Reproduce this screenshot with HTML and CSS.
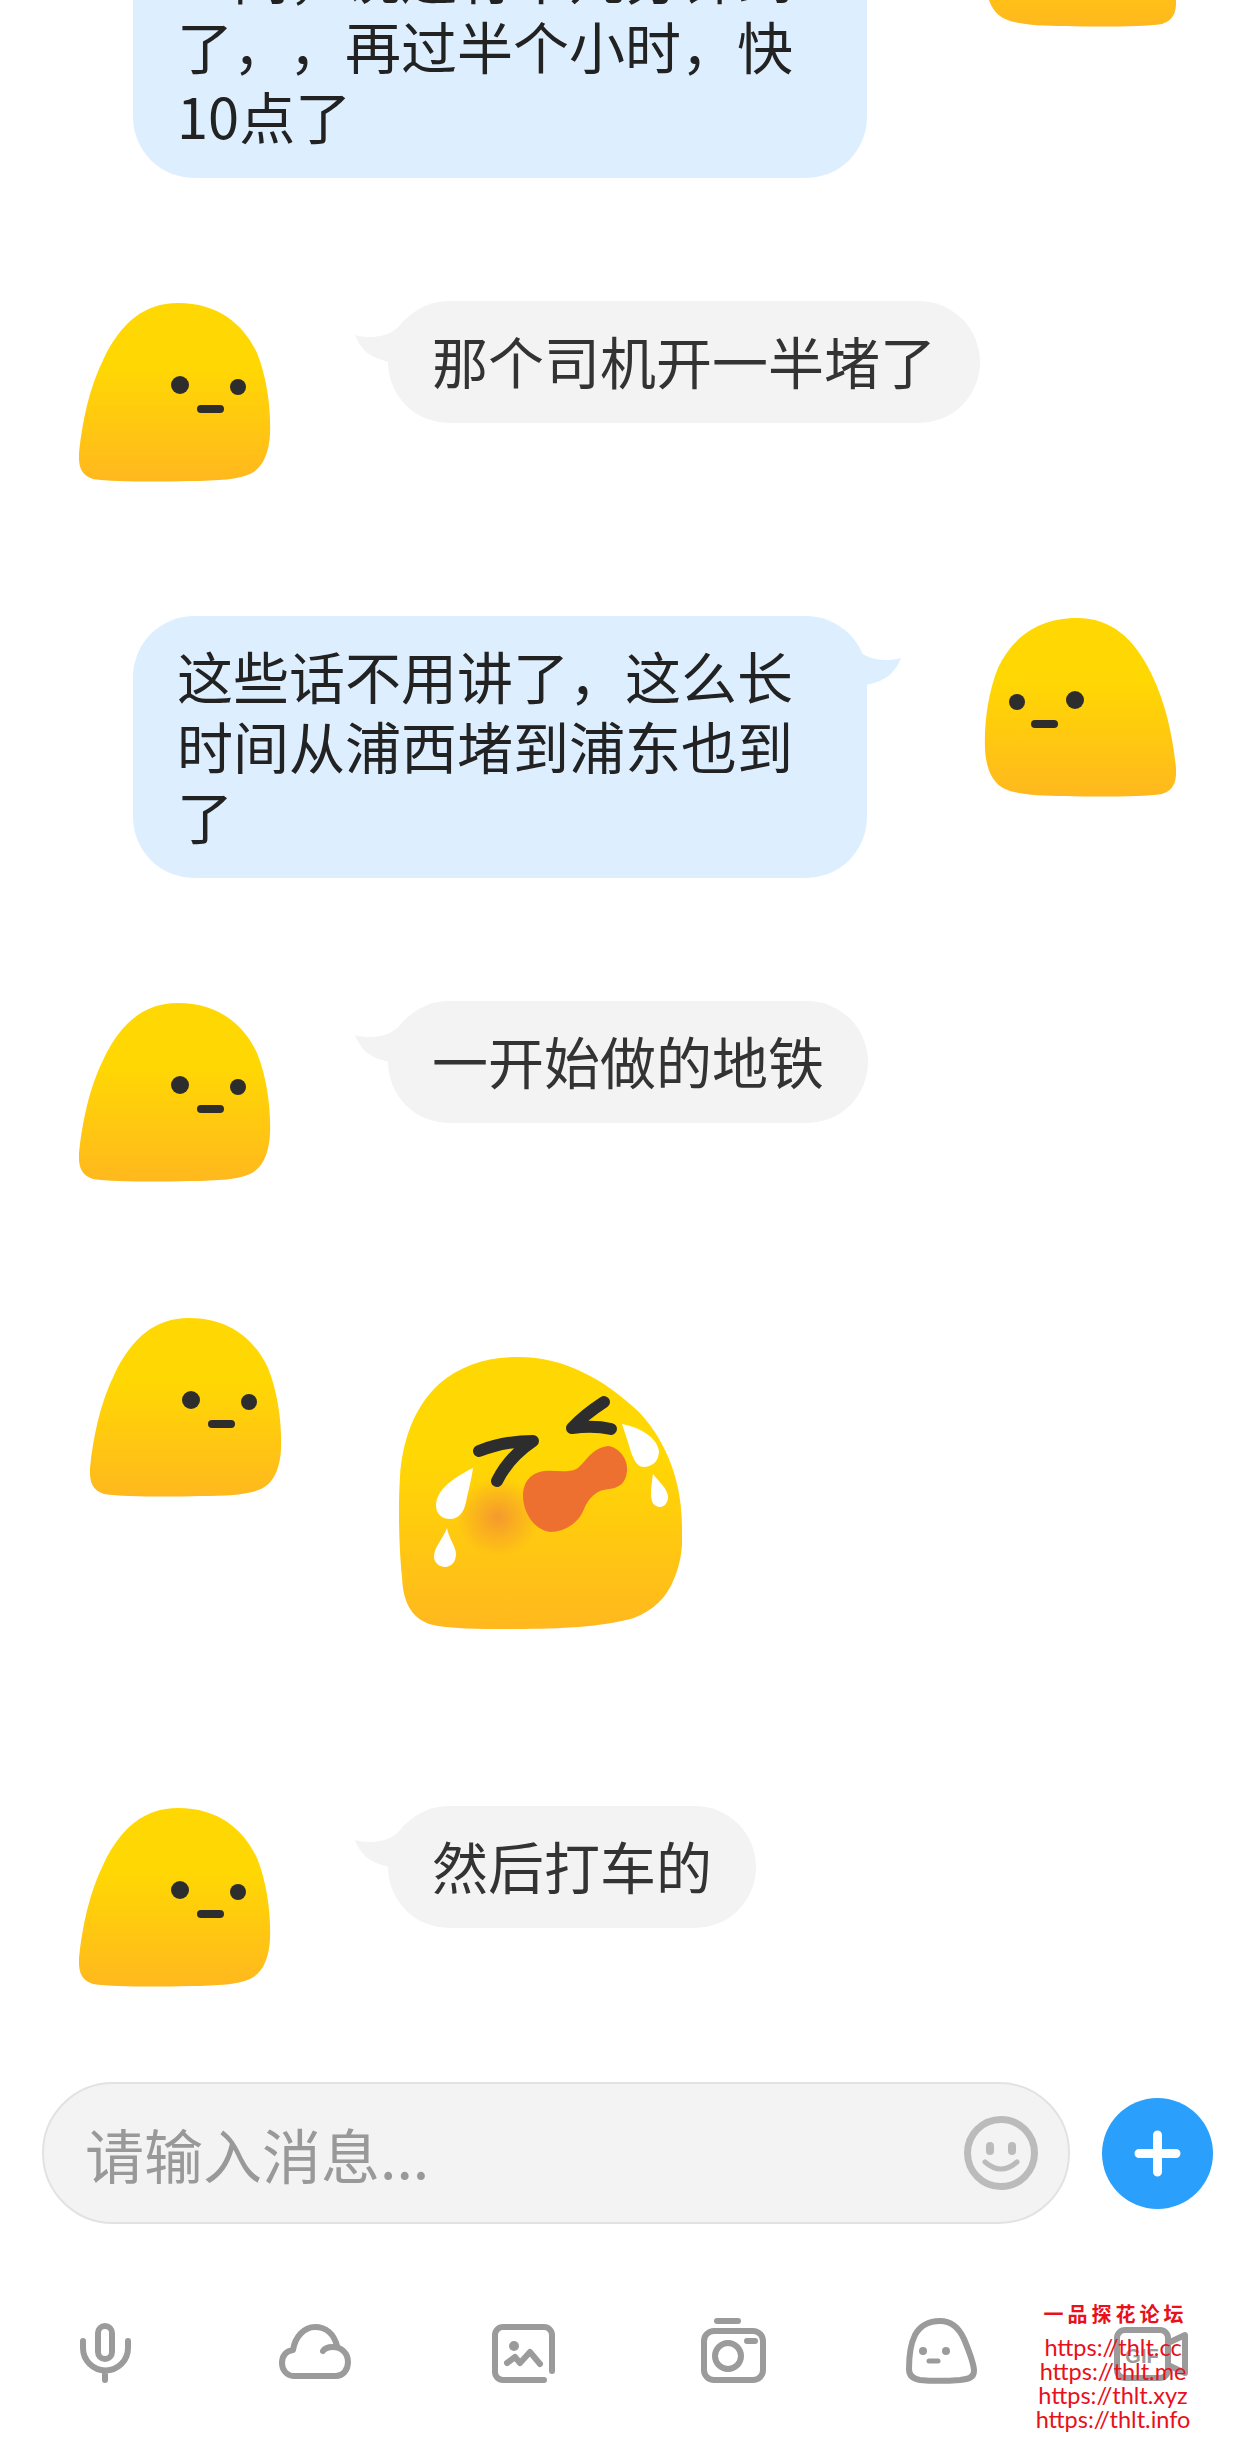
FILE: index.html
```html
<!DOCTYPE html>
<html lang="zh-CN">
<head>
  <meta charset="UTF-8">
  <meta name="viewport" content="width=device-width, initial-scale=1.0">
  <title>聊天</title>
  <link rel="stylesheet" href="styles.css">
</head>
<body>
  <!-- shared shapes -->
  <svg class="defs" aria-hidden="true">
    <defs>
      <linearGradient id="blobFill" x1="0" y1="0" x2="0" y2="1">
        <stop offset="0.35" stop-color="#ffd803"/>
        <stop offset="1" stop-color="#ffb81e"/>
      </linearGradient>
      <radialGradient id="blush">
        <stop offset="0" stop-color="#f5992e"/>
        <stop offset="1" stop-color="#f5992e" stop-opacity="0"/>
      </radialGradient>
      <symbol id="blob" viewBox="0 0 192 192">
        <path fill="url(#blobFill)" d="M99 2C140 2 165 24 178 52C188 77 192 107 191 133C190 152 184 167 171 173C160 178 140 180 110 180C80 181 35 181 14 178C4 175 -1 168 0 152C3 122 10 87 25 57C42 22 65 2 99 2Z"/>
        <circle cx="101" cy="84" r="9" fill="#2d2d2d"/>
        <circle cx="159" cy="86" r="8" fill="#2d2d2d"/>
        <rect x="118" y="104" width="27" height="8" rx="4" fill="#2d2d2d"/>
      </symbol>
      <symbol id="tail" viewBox="0 0 60 45">
        <path d="M0 15C18 20 40 16 49 0L60 20L35 42C15 38 6 30 0 15Z"/>
      </symbol>
    </defs>
  </svg>

  <div class="chat">
    <div class="row mine">
      <svg class="avatar"><use href="#blob"/></svg>
      <div class="bubble">
        <svg class="tail"><use href="#tail"/></svg>
        我问他什么时候能到这里一问，说还有十几分钟到了，，再过半个小时，快10点了
      </div>
    </div>

    <div class="row">
      <svg class="avatar"><use href="#blob"/></svg>
      <div class="bubble">
        <svg class="tail"><use href="#tail"/></svg>
        那个司机开一半堵了
      </div>
    </div>

    <div class="row mine">
      <svg class="avatar"><use href="#blob"/></svg>
      <div class="bubble">
        <svg class="tail"><use href="#tail"/></svg>
        这些话不用讲了，这么长时间从浦西堵到浦东也到了
      </div>
    </div>

    <div class="row">
      <svg class="avatar"><use href="#blob"/></svg>
      <div class="bubble">
        <svg class="tail"><use href="#tail"/></svg>
        一开始做的地铁
      </div>
    </div>

    <div class="row sticker-row">
      <svg class="avatar"><use href="#blob"/></svg>
      <!-- crying laugh sticker -->
      <svg class="sticker" viewBox="0 0 283 272">
        <path fill="url(#blobFill)" d="M120 0C165 0 205 22 240 55C268 85 283 125 283 170C284 190 282 205 275 222C268 240 255 253 235 261C200 271 150 272 110 272C80 272 50 272 30 267C12 260 4 245 3 220C0 190 -1 150 1 120C3 85 15 50 40 27C62 8 88 0 120 0Z"/>
        <ellipse cx="99" cy="160" rx="42" ry="40" fill="url(#blush)"/>
        <path fill="#ee7030" d="M210 89C222 92 229 103 228 114C227 126 220 131 210 132C198 133 190 140 185 152C180 166 165 175 151 175C135 173 124 155 124 139C124 124 133 115 146 114C158 113 172 117 180 110C188 103 194 90 210 89Z"/>
        <path class="sticker-eye" d="M80 94Q105 84 134 84Q110 100 98 124"/>
        <path class="sticker-eye" d="M205 45Q185 58 173 71Q195 68 212 72"/>
        <path fill="#fff" d="M74 111C60 118 38 130 37 148C37 158 44 162 51 162C60 162 65 155 67 145C69 135 72 125 74 111Z"/>
        <path fill="#fff" d="M48 171C44 182 35 190 35 200C35 206 41 210 46 210C52 210 57 205 57 197C57 190 50 182 48 171Z"/>
        <path fill="#fff" d="M223 67C240 70 258 80 260 94C260 105 252 110 245 110C238 110 235 103 232 95C229 85 226 76 223 67Z"/>
        <path fill="#fff" d="M254 117C260 125 269 132 269 140C269 146 265 150 261 150C255 150 252 145 252 138C252 130 253 124 254 117Z"/>
      </svg>
    </div>

    <div class="row">
      <svg class="avatar"><use href="#blob"/></svg>
      <div class="bubble">
        <svg class="tail"><use href="#tail"/></svg>
        然后打车的
      </div>
    </div>
  </div>

  <!-- 输入框 -->
  <div class="composer">
    <div class="input">
      <span class="placeholder">请输入消息...</span>
      <svg class="smile" viewBox="0 0 80 80">
        <circle cx="40" cy="40" r="33.5" stroke-width="7"/>
        <path d="M29 33V38M51 33V38" stroke-width="8"/>
        <path d="M24 49Q40 63 56 49" stroke-width="5"/>
      </svg>
    </div>
    <svg class="send" viewBox="0 0 111 111">
      <circle cx="55.5" cy="55.5" r="55.5"/>
      <path d="M37 55.5H74M55.5 37V74"/>
    </svg>
  </div>

  <!-- 底部工具栏 -->
  <div class="toolbar">
    <svg class="tool" viewBox="0 0 80 80">
      <rect x="33" y="13" width="14" height="33" rx="7"/>
      <path d="M18 28V35A22.5 22.5 0 0 0 63 35V28M40 58V67"/>
    </svg>
    <svg class="tool" viewBox="0 0 80 80">
      <path d="M20 63H62C69 63 74 57 74 49C74 40 67 34 59 34C54 34 50 36 49 38"/>
      <path d="M20 63C12 63 8 56 8 50C8 43 12 38 19 37C21 24 30 14 41 14C52 14 60 21 63 33"/>
    </svg>
    <svg class="tool" viewBox="0 0 80 80">
      <path d="M61 67H20A8 8 0 0 1 12 59V22A8 8 0 0 1 20 14H61A8 8 0 0 1 69 22V58"/>
      <circle class="solid" cx="31" cy="33" r="5"/>
      <path d="M24 50L32 44L37 50L47 39L57 51"/>
    </svg>
    <svg class="tool" viewBox="0 0 80 80">
      <path d="M24 8H45M54 28H62"/>
      <rect x="11" y="18" width="59" height="49" rx="10"/>
      <circle cx="35" cy="43" r="13"/>
    </svg>
    <svg class="tool" viewBox="0 0 80 80">
      <path d="M38 8C50 8 57 15 62 26C67 38 72 50 72 58C72 65 66 66 58 67C45 68 28 68 18 67C11 66 7 63 7 56C7 46 8 32 13 22C18 13 27 8 38 8Z"/>
      <circle class="solid" cx="21" cy="38" r="4"/>
      <circle class="solid" cx="44" cy="38" r="4"/>
      <path class="thin" d="M27 48H36"/>
    </svg>
    <svg class="tool" viewBox="0 0 80 80">
      <rect x="6" y="17" width="51" height="48" rx="8"/>
      <path d="M57 30L74 22V60L57 52"/>
      <text class="gif" x="31" y="50">GIF</text>
    </svg>
  </div>

  <!-- 水印 -->
  <div class="mark">
    <div class="mark-title">一品探花论坛</div>
    <div>https://thlt.cc</div>
    <div>https://thlt.me</div>
    <div>https://thlt.xyz</div>
    <div>https://thlt.info</div>
  </div>
</body>
</html>
```

FILE: styles.css
```css
*{margin: 0;padding: 0;box-sizing: border-box;}
body{
  position: relative;
  height: 2454px;
  overflow: hidden;
  background: #fff;
  font-family: "Noto Sans CJK SC", "Liberation Sans", sans-serif;
  text-spacing-trim: space-all;
}
.defs{
  position: absolute;
  width: 0;
  height: 0;
}

/* messages */
.chat{
  display: flex;
  flex-direction: column;
  gap: 123px;
  margin-top: -154px;
}
.row{
  display: flex;
  align-items: flex-start;
  gap: 117px;
  padding: 0 80px 0 79px;
}
.row.mine{
  flex-direction: row-reverse;
}
.row.mine .avatar{
  transform: scaleX(-1);
}
.sticker-row{
  padding-left: 90px;
}
.avatar{
  flex: none;
  width: 192px;
  height: 192px;
}
.bubble{
  position: relative;
  max-width: 734px;
  padding: 24px 44px 28px;
  border-radius: 61px;
  background: #f3f3f3;
  color: #333;
  font-size: 56px;
  line-height: 70px;
}
.tail{
  position: absolute;
  top: 19px;
  left: -33px;
  width: 60px;
  height: 45px;
  fill: #f3f3f3;
}
.mine .bubble{
  background: #ddefff;
  color: #222;
}
.mine .tail{
  top: 27px;
  left: auto;
  right: -34px;
  fill: #ddefff;
  transform: scaleX(-1);
}
.sticker{
  flex: none;
  width: 283px;
  height: 272px;
  margin: 41px 0 54px;
}
.sticker-eye{
  fill: none;
  stroke: #2d2d2d;
  stroke-width: 12;
  stroke-linecap: round;
  stroke-linejoin: round;
}

/* input */
.composer{
  display: flex;
  align-items: center;
  gap: 32px;
  margin-top: 84px;
  padding-left: 42px;
}
.input{
  display: flex;
  align-items: center;
  justify-content: space-between;
  width: 1028px;
  height: 142px;
  padding: 0 27px 0 41px;
  border: 2px solid #e2e2e2;
  border-radius: 71px;
  background: #f3f3f3;
}
.placeholder{
  color: #999;
  font-size: 59px;
}
.smile{
  width: 80px;
  height: 80px;
  fill: none;
  stroke: #bbb;
  stroke-linecap: round;
}
.send{
  width: 111px;
  height: 111px;
  fill: #2a9ffb;
  stroke: none;
}
.send path{
  fill: none;
  stroke: #fff;
  stroke-width: 9;
  stroke-linecap: round;
}

/* bottom icons */
.toolbar{
  display: grid;
  grid-template-columns: repeat(6, 1fr);
  justify-items: center;
  margin-top: 89px;
}
.tool{
  width: 80px;
  height: 80px;
  fill: none;
  stroke: #9b9b9b;
  stroke-width: 6;
  stroke-linecap: round;
  stroke-linejoin: round;
}
.tool .solid{
  fill: #9b9b9b;
  stroke: none;
}
.tool .thin{
  stroke-width: 5;
}
.tool .gif{
  fill: #9b9b9b;
  stroke: none;
  font-family: "Liberation Sans", sans-serif;
  font-size: 20px;
  font-weight: bold;
  text-anchor: middle;
}

/* watermark */
.mark{
  position: absolute;
  left: 1030px;
  top: 2302px;
  width: 166px;
  color: #e8101a;
  font-family: "Lato", sans-serif;
  font-size: 23.5px;
  line-height: 24px;
  text-align: center;
}
.mark-title{
  margin-bottom: 9px;
  padding-left: 5px;
  font-family: "Noto Sans CJK SC", sans-serif;
  font-size: 20px;
  font-weight: bold;
  letter-spacing: 4px;
}
```
